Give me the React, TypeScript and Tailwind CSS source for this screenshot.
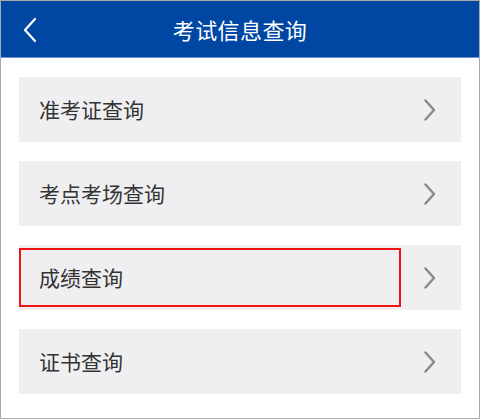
const items = ["准考证查询", "考点考场查询", "成绩查询", "证书查询"];

function ChevronRight() {
  return (
    <svg width="12" height="22" viewBox="0 0 12 22" fill="none" className="shrink-0">
      <path d="M1.5 1.5 L10 11 L1.5 20.5" stroke="#8a8a8a" strokeWidth="2.4" strokeLinecap="round" strokeLinejoin="round" />
    </svg>
  );
}

export default function App() {
  return (
    <div
      className="w-[480px] h-[419px] border border-[#a9a9a9] bg-white overflow-hidden"
      style={{ fontFamily: '"Noto Sans CJK SC", "Noto Sans", sans-serif' }}
    >
      {/* Header */}
      <div className="relative h-[57px] bg-[#0047a4] border-b border-[#6a93cf] flex items-center justify-center">
        <button className="absolute left-[20px] top-[16px] w-[18px] h-[26px] flex items-center justify-center">
          <svg width="16" height="26" viewBox="0 0 16 26" fill="none">
            <path d="M13 2 L3 13 L13 24" stroke="white" strokeWidth="2.2" strokeLinecap="round" strokeLinejoin="round" />
          </svg>
        </button>
        <h1 className="text-white text-[22px] leading-none tracking-[0.4px]">考试信息查询</h1>
      </div>

      {/* List */}
      <div className="flex flex-col gap-[19px] px-[18px] pt-[19px]">
        {items.map((label, i) => (
          <div key={label} className="relative h-[65px] bg-[#efeff1] flex items-center justify-between pl-[20px] pr-[25px]">
            <span className="text-[21px] text-[#333333] leading-none">{label}</span>
            <ChevronRight />
            {i === 2 && (
              <div className="absolute left-0 top-[3px] w-[382px] h-[59px] border-2 border-[#f01414]" />
            )}
          </div>
        ))}
      </div>
    </div>
  );
}
